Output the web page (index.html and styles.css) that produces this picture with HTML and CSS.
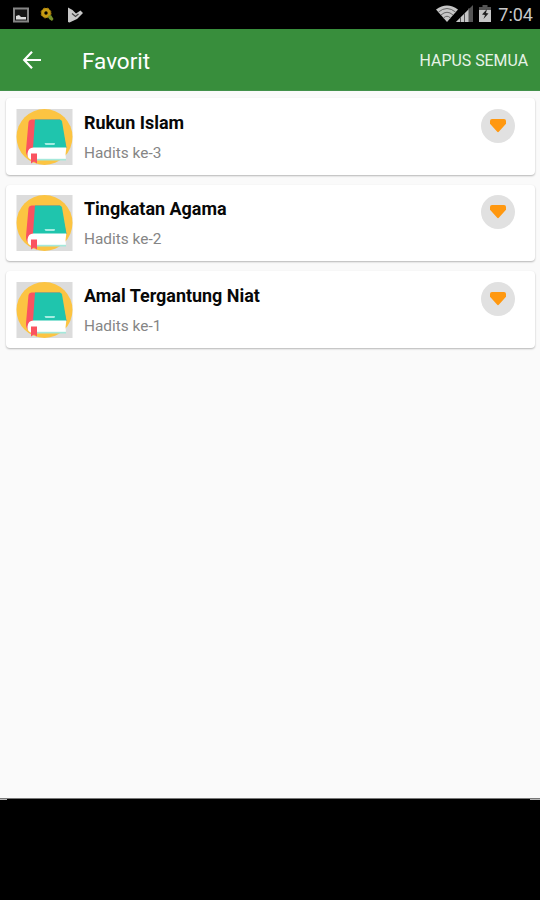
FILE: index.html
```
<!DOCTYPE html>
<html lang="id">
<head>
<meta charset="utf-8">
<title>Favorit</title>
<link rel="stylesheet" href="styles.css">
</head>
<body>
<svg class="defs" width="0" height="0" aria-hidden="true">
  <symbol id="book" viewBox="0 0 56 56">
    <rect width="56" height="56" fill="#dcdcdc"/>
    <circle cx="28" cy="28" r="28" fill="#fcc442"/>
    <path d="M15 10.500H43.500L50 39H19L14 50Q9 47 9.500 41L12 13Q12.500 10.500 15 10.500Z" fill="#fa5360"/>
    <path d="M18.500 10.500H43Q45 10.500 45.500 12.500L50 39H16.500Z" fill="#1fc5ad"/>
    <path d="M17 38.500H49.800Q48.500 45 49.500 51H16Q10.500 50 11 44.500Q11.500 38.500 17 38.500Z" fill="#fff"/>
    <path d="M20 49.800H49.500V51.500H20Z" fill="#a5e8db"/>
    <path d="M14.500 44.500H20.500V54.500L17.500 52.500L14.500 54.500Z" fill="#fa5360"/>
    <path d="M28 34H38.500L38 36H29Z" fill="#a5ece2"/>
  </symbol>
  <symbol id="heart" viewBox="0 0 34 34">
    <path d="M11 10H23Q25 10 25 12V14.800L18 22.500Q17 24 16 22.500L9 14.800V12Q9 10 11 10Z" fill="#ff9810"/>
  </symbol>
</svg>
<div class="status">
  <div class="notices">
    <svg width="16" height="16" viewBox="0 0 16 16"><rect x="1" y="1.500" width="14" height="13" fill="#151515" stroke="#858585" stroke-width="2"/><path d="M3 12.500V9L6 8L8 10H13V12.500Z" fill="#ddd"/></svg>
    <svg width="16" height="16" viewBox="0 0 16 16"><circle cx="6" cy="6" r="3.300" fill="none" stroke="#c69b12" stroke-width="3.200"/><circle cx="6" cy="6" r="5" fill="none" stroke="#a87d0c" stroke-width="1" stroke-dasharray="2 2"/><path d="M8 9L11 8L13.500 12L12 14L9 12Z" fill="#78922b"/></svg>
    <svg width="17" height="16" viewBox="0 0 17 16"><path d="M1 .5L5.500 3L9 6.500L13.500 3.500L16 6L10 12L2.500 15.500L1 15Z" fill="#c7c7c7"/><path d="M5 6.500L8.500 9.500L11.500 7" fill="none" stroke="#444" stroke-width="1.200"/></svg>
  </div>
  <div class="system">
    <svg class="wifi" width="22" height="17" viewBox="0 0 22 17"><path d="M0 4.500Q11-3.500 22 4.500L11 17Z" fill="#c6c6c6"/><path d="M2.500 7Q11 0 19.500 7M5 10Q11 4.500 17 10M7.500 13Q11 9.500 14.500 13" fill="none" stroke="#666" stroke-width="1"/></svg>
    <svg class="signal" width="18" height="17" viewBox="0 0 18 17"><path d="M0 17L17 0V17Z" fill="#555"/><path d="M0 17L13 4V17Z" fill="#c6c6c6"/><path d="M4.500 12V17M8.500 8V17M13 3V17" stroke="#555" stroke-width="1"/></svg>
    <svg class="battery" width="12" height="17" viewBox="0 0 12 17"><path d="M3.500 0H8.500V2H12V17H0V2H3.500Z" fill="#555"/><path d="M0 5H12V17H0Z" fill="#c6c6c6"/><path d="M8 4L3 9.500L6 10L4.500 14L9.500 8.500L7 8Z" fill="#222"/></svg>
    <span class="clock">7:04</span>
  </div>
</div>
<header class="bar">
  <svg class="back" width="20" height="20" viewBox="0 0 20 20"><path d="M10 1.700L2.200 10L10 18.300M2.500 10H19" fill="none" stroke="#fff" stroke-width="2.200"/></svg>
  <h1 class="title">Favorit</h1>
  <span class="clear">HAPUS SEMUA</span>
</header>
<main class="list">
  <article class="card">
    <svg class="cover"><use href="#book"/></svg>
    <div class="text"><h2 class="name">Rukun Islam</h2><p class="sub">Hadits ke-3</p></div>
    <svg class="fav"><use href="#heart"/></svg>
  </article>
  <article class="card">
    <svg class="cover"><use href="#book"/></svg>
    <div class="text"><h2 class="name">Tingkatan Agama</h2><p class="sub">Hadits ke-2</p></div>
    <svg class="fav"><use href="#heart"/></svg>
  </article>
  <article class="card">
    <svg class="cover"><use href="#book"/></svg>
    <div class="text"><h2 class="name">Amal Tergantung Niat</h2><p class="sub">Hadits ke-1</p></div>
    <svg class="fav"><use href="#heart"/></svg>
  </article>
</main>
<footer class="nav"><span class="edge edge-left"></span><span class="edge edge-right"></span></footer>
</body>
</html>
```
FILE: styles.css
```
* { box-sizing: border-box; }
body {
  margin: 0;
  width: 540px;
  height: 900px;
  display: flex;
  flex-direction: column;
  background: #fafafa;
  font-family: Roboto, sans-serif;
  overflow: hidden;
}
svg { display: block; flex: none; }
h1, h2, p { margin: 0; }
.defs { display: none; }
.status {
  height: 29px;
  flex: none;
  display: flex;
  justify-content: space-between;
  background: #000;
  padding: 0 7px 0 13px;
}
.notices { display: flex; gap: 11px; padding-top: 7px; }
.system { display: flex; padding-top: 5px; }
.signal { margin-right: 5px; }
.battery { margin-right: 7px; }
.wifi { margin-right: -2px; }
.clock { font-size: 18px; line-height: 19px; color: #c8c8c8; }
.bar {
  height: 62px;
  flex: none;
  display: flex;
  align-items: center;
  background: #388e3c;
  padding: 0 12px 0 22px;
  color: #fff;
  border-bottom: 1px solid #43914b;
}
.back { margin-top: 1px; }
.title { margin-left: 40px; font-size: 22.500px; font-weight: 400; line-height: 26px; padding-top: 3px; }
.clear { margin-left: auto; padding-top: 2px; font-size: 15.900px; color: #e7f3e7; }
.list {
  flex: 1;
  display: flex;
  flex-direction: column;
  gap: 10px;
  padding: 7px 5.500px 0 6px;
}
.card {
  height: 76.500px;
  display: flex;
  align-items: flex-start;
  padding: 10.500px 19.500px 0 10px;
  background: #fff;
  border-radius: 4px;
  box-shadow: 0 1px 2px rgba(0, 0, 0, .28);
}
.cover { width: 57px; height: 56px; }
.text { margin-left: 11px; padding-top: 3px; }
.name { font-size: 17.950px; font-weight: 700; line-height: 22px; color: #080808; }
.sub { margin-top: 10px; font-size: 15.400px; line-height: 18px; color: #858585; }
.fav { margin-left: auto; width: 34px; height: 34px; border-radius: 50%; background: #e1e1e1; }
.nav {
  height: 102px;
  flex: none;
  display: flex;
  justify-content: space-between;
  background: #000;
  border-top: 1px solid #777;
}
.edge { height: 1px; background: #b5b5b5; }
.edge-left { width: 7px; }
.edge-right { width: 10px; }
```
